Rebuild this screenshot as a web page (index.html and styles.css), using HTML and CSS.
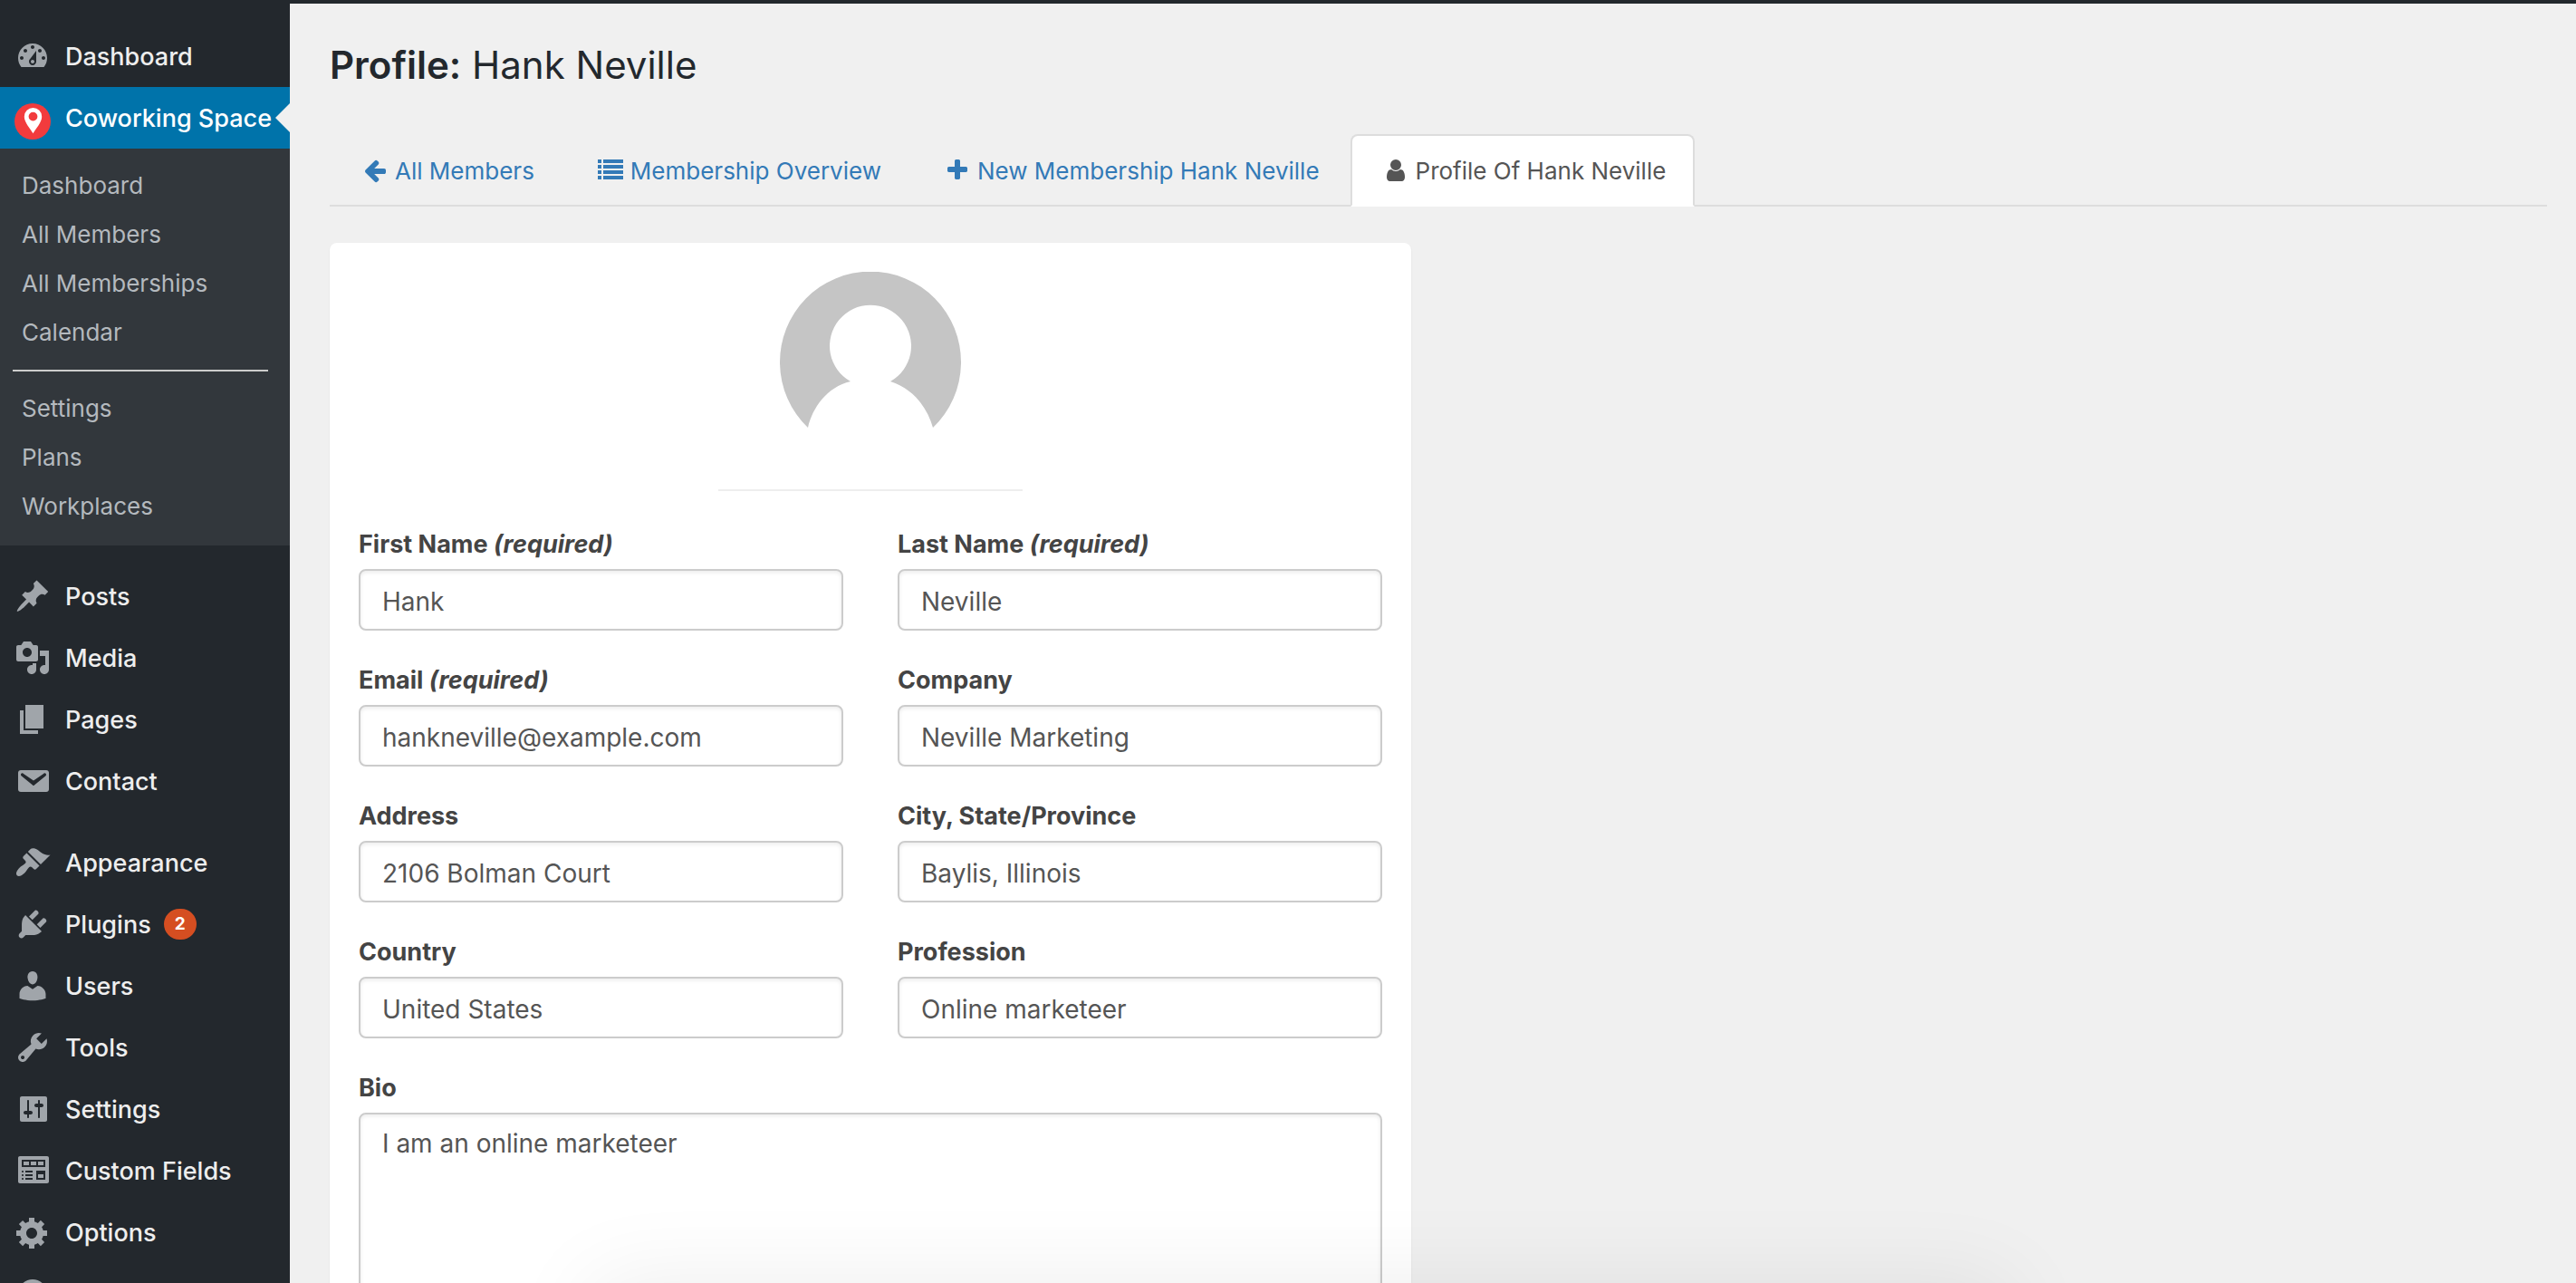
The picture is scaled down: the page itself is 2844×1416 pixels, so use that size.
FILE: index.html
```html
<!DOCTYPE html>
<html lang="en">
<head>
<meta charset="utf-8">
<title>Profile: Hank Neville</title>
<link rel="stylesheet" href="styles.css">
</head>
<body>
<div class="app">
  <nav class="sidebar" aria-label="Main menu">
    <ul class="menu">
      <li><a class="menu-item" href="#"><svg class="menu-icon" viewBox="0 0 20 20"><path d="M3.76 16h12.48c1.1-1.37 1.76-3.11 1.76-5 0-4.42-3.58-8-8-8s-8 3.58-8 8c0 1.89.66 3.63 1.76 5zM10 4c.55 0 1 .45 1 1s-.45 1-1 1-1-.45-1-1 .45-1 1-1zM6 6c.55 0 1 .45 1 1s-.45 1-1 1-1-.45-1-1 .45-1 1-1zm8 0c.55 0 1 .45 1 1s-.45 1-1 1-1-.45-1-1 .45-1 1-1zm-5.37 5.55L12 7v6c0 1.1-.9 2-2 2s-2-.9-2-2c0-.57.24-1.08.63-1.45zM4 10c.55 0 1 .45 1 1s-.45 1-1 1-1-.45-1-1 .45-1 1-1zm12 0c.55 0 1 .45 1 1s-.45 1-1 1-1-.45-1-1 .45-1 1-1zm-5 3c0-.55-.45-1-1-1s-1 .45-1 1 .45 1 1 1 1-.45 1-1z"/></svg>Dashboard</a></li>
      <li>
        <a class="menu-item current" href="#"><svg class="menu-icon" viewBox="0 0 40 40"><circle cx="20" cy="24" r="20" fill="#f23b3d"/><path fill="#fff" fill-rule="evenodd" d="M20.500 9a9.700 9.700 0 0 1 9.700 9.700c0 6.300-6.700 13.300-9.700 18.600-3-5.300-9.700-12.300-9.700-18.600A9.700 9.700 0 0 1 20.500 9zm0 4.700a4.900 4.900 0 1 0 0 9.800 4.900 4.900 0 0 0 0-9.800z"/></svg>Coworking Space</a>
        <ul class="submenu">
          <li><a href="#">Dashboard</a></li>
          <li><a href="#">All Members</a></li>
          <li><a href="#">All Memberships</a></li>
          <li><a href="#">Calendar</a></li>
          <li class="submenu-rule" role="separator"></li>
          <li><a href="#">Settings</a></li>
          <li><a href="#">Plans</a></li>
          <li><a href="#">Workplaces</a></li>
        </ul>
      </li>
    </ul>
    <ul class="menu">
      <li><a class="menu-item" href="#"><svg class="menu-icon" viewBox="0 0 20 20"><path d="M10.440 3.020l1.820-1.820 6.360 6.350-1.830 1.820c-1.050-.68-2.480-.57-3.410.36l-.75.75c-.92.93-1.040 2.350-.35 3.410l-1.830 1.820-2.410-2.410-2.800 2.790c-.42.42-3.380 2.710-3.800 2.290s1.860-3.390 2.280-3.810l2.790-2.790L4.100 9.360l1.830-1.820c1.050.69 2.480.57 3.400-.36l.75-.75c.93-.92 1.050-2.350.36-3.410z"/></svg>Posts</a></li>
      <li><a class="menu-item" href="#"><svg class="menu-icon" viewBox="0 0 20 20"><path d="M13 11V4c0-.55-.45-1-1-1h-1.670L9 1H5L3.670 3H2c-.55 0-1 .45-1 1v7c0 .55.45 1 1 1h10c.55 0 1-.45 1-1zM7 4.500c1.380 0 2.500 1.120 2.500 2.500S8.380 9.500 7 9.500 4.500 8.380 4.500 7 5.620 4.500 7 4.500zM14 6h5v10.500c0 1.380-1.120 2.500-2.500 2.500S14 17.880 14 16.500s1.120-2.500 2.500-2.500c.17 0 .34.02.5.05V9h-3V6zm-4 8.050V13h2v3.500c0 1.380-1.120 2.500-2.500 2.500S7 17.880 7 16.500 8.120 14 9.500 14c.17 0 .34.02.5.05z"/></svg>Media</a></li>
      <li><a class="menu-item" href="#"><svg class="menu-icon" viewBox="0 0 20 20"><path d="M6 15V2h10v13H6zm-1 1h8v2H3V5h2v11z"/></svg>Pages</a></li>
      <li><a class="menu-item" href="#"><svg class="menu-icon" viewBox="0 0 20 20"><path d="M3.500 4h14c.9 0 1.500.6 1.500 1.400v9.200c0 .8-.6 1.400-1.500 1.400h-14c-.9 0-1.500-.6-1.500-1.400V5.400C2 4.600 2.600 4 3.500 4zm7 8.600l6.730-5.530c.24-.2.43-.66.13-1.070-.29-.41-.82-.42-1.170-.17l-5.690 3.860L4.800 5.830c-.35-.25-.88-.24-1.170.17-.3.41-.11.87.13 1.070z"/></svg>Contact</a></li>
    </ul>
    <ul class="menu">
      <li><a class="menu-item" href="#"><svg class="menu-icon" viewBox="0 0 20 20"><path d="M14.480 11.060L7.410 3.990l1.500-1.500c.5-.56 2.300-.47 3.510.32 1.210.8 1.430 1.280 2.910 2.100 1.180.64 2.450 1.260 4.450.85zm-.71.71L6.700 4.700 4.930 6.470c-.39.39-.39 1.020 0 1.410l1.060 1.060c.39.39.39 1.030 0 1.420-.6.6-1.430 1.110-2.210 1.690-.35.26-.7.53-1.010.84C1.430 14.230.4 16.080 1.400 17.070c.99 1 2.840-.03 4.180-1.360.31-.31.58-.66.85-1.020.57-.78 1.080-1.610 1.690-2.210.39-.39 1.020-.39 1.410 0l1.060 1.060c.39.39 1.020.39 1.410 0z"/></svg>Appearance</a></li>
      <li><a class="menu-item" href="#"><svg class="menu-icon" viewBox="0 0 20 20"><path d="M13.110 4.360L9.870 7.600 8 5.730l3.240-3.240c.35-.34 1.050-.2 1.560.32.52.51.66 1.210.31 1.550zm-8 1.770l.91-1.120 9.010 9.010-1.190.84c-.71.71-2.630 1.160-3.820 1.160H6.140L4.900 17.260c-.59.59-1.540.59-2.120 0-.59-.58-.59-1.530 0-2.120l1.240-1.240v-3.880c0-1.130.4-3.190 1.090-3.890zm7.260 3.970l3.240-3.240c.34-.35 1.040-.21 1.550.31.52.51.66 1.210.31 1.550l-3.240 3.250z"/></svg>Plugins<span class="badge">2</span></a></li>
      <li><a class="menu-item" href="#"><svg class="menu-icon" viewBox="0 0 20 20"><path d="M10 9.250c-2.270 0-2.730-3.440-2.730-3.440C7 4.020 7.820 2 9.970 2c2.160 0 2.980 2.020 2.710 3.810 0 0-.41 3.440-2.680 3.440zm0 2.570L12.720 10c2.390 0 4.520 2.330 4.520 4.530v2.490s-3.650 1.130-7.240 1.130c-3.650 0-7.240-1.130-7.240-1.130v-2.490c0-2.250 1.940-4.480 4.470-4.480z"/></svg>Users</a></li>
      <li><a class="menu-item" href="#"><svg class="menu-icon" viewBox="0 0 20 20"><path d="M16.680 9.770c-1.340 1.340-3.300 1.670-4.950.99l-5.410 6.520c-.99.99-2.590.99-3.580 0s-.99-2.590 0-3.570l6.520-5.420c-.68-1.650-.35-3.610.99-4.950 1.280-1.280 3.120-1.620 4.720-1.060l-2.890 2.890 2.820 2.820 2.860-2.870c.53 1.580.18 3.390-1.080 4.650zM3.810 16.210c.4.39 1.040.39 1.430 0 .4-.4.4-1.040 0-1.430-.39-.4-1.030-.4-1.430 0-.39.39-.39 1.030 0 1.430z"/></svg>Tools</a></li>
      <li><a class="menu-item" href="#"><svg class="menu-icon" viewBox="0 0 20 20"><path d="M18 16V4c0-.55-.45-1-1-1H4c-.55 0-1 .45-1 1v12c0 .55.45 1 1 1h13c.55 0 1-.45 1-1zM8 11h1c.55 0 1 .45 1 1s-.45 1-1 1H8v1.500c0 .28-.22.5-.5.5s-.5-.22-.5-.5V13H6c-.55 0-1-.45-1-1s.45-1 1-1h1V5.500c0-.28.22-.5.5-.5s.5.22.5.5V11zm5-2h-1c-.55 0-1-.45-1-1s.45-1 1-1h1V5.500c0-.28.22-.5.5-.5s.5.22.5.5V7h1c.55 0 1 .45 1 1s-.45 1-1 1h-1v5.500c0 .28-.22.5-.5.5s-.5-.22-.5-.5V9z"/></svg>Settings</a></li>
      <li><a class="menu-item" href="#"><svg class="menu-icon" viewBox="0 0 20 20"><path d="M19 16V3c0-.55-.45-1-1-1H3c-.55 0-1 .45-1 1v13c0 .55.45 1 1 1h15c.55 0 1-.45 1-1zM4 4h13v4H4V4zm1 1v2h3V5H5zm4 0v2h3V5H9zm4 0v2h3V5h-3zm-8.500 5c.28 0 .5.22.5.5s-.22.5-.5.5-.5-.22-.5-.5.22-.5.5-.5zM6 10h4v1H6v-1zm6 0h5v5h-5v-5zm-7.500 2c.28 0 .5.22.5.5s-.22.5-.5.5-.5-.22-.5-.5.22-.5.5-.5zM6 12h4v1H6v-1zm7 0v2h3v-2h-3zm-8.500 2c.28 0 .5.22.5.5s-.22.5-.5.5-.5-.22-.5-.5.22-.5.5-.5zM6 14h4v1H6v-1z"/></svg>Custom Fields</a></li>
      <li><a class="menu-item" href="#"><svg class="menu-icon" viewBox="0 0 20 20"><path d="M18 12h-2.180c-.17.7-.44 1.350-.81 1.930l1.540 1.540-2.100 2.100-1.540-1.540c-.58.36-1.230.63-1.910.79V19H8v-2.180c-.68-.16-1.330-.43-1.910-.79l-1.540 1.540-2.120-2.120 1.540-1.540c-.36-.58-.63-1.230-.79-1.910H1V9.030h2.170c.16-.7.44-1.350.8-1.940L2.430 5.550l2.100-2.100 1.540 1.540c.58-.37 1.240-.64 1.930-.81V2h3v2.180c.68.16 1.330.43 1.910.79l1.540-1.540 2.120 2.120-1.540 1.540c.36.59.64 1.240.8 1.940H18V12zm-8.500 1.500c1.660 0 3-1.340 3-3s-1.340-3-3-3-3 1.340-3 3 1.340 3 3 3z"/></svg>Options</a></li>
      <li><a class="menu-item" href="#" aria-label="More"><svg class="menu-icon" viewBox="0 0 20 20"><circle cx="10" cy="10" r="8"/></svg></a></li>
    </ul>
  </nav>

  <main class="main">
    <h1 class="title"><strong>Profile:</strong> Hank Neville</h1>

    <nav class="tabs" aria-label="Member">
      <a class="tab" href="#"><svg class="tab-icon" viewBox="0 0 1792 1792"><path d="M1664 896v128q0 53-32.500 90.500t-84.500 37.500h-704l293 294q38 36 38 90t-38 90l-75 76q-37 37-90 37-52 0-91-37l-651-652q-37-37-37-90 0-52 37-91l651-650q38-38 91-38 52 0 90 38l75 74q38 38 38 91t-38 91l-293 293h704q52 0 84.500 37.500t32.500 90.500z"/></svg>All Members</a>
      <a class="tab" href="#"><svg class="tab-icon" viewBox="0 0 28 28"><path d="M0 2h4v4H0zM0 8h4v4H0zM0 14h4v4H0zM0 20h4v4H0zM6 2h22v4H6zM6 8h22v4H6zM6 14h22v4H6zM6 20h22v4H6z"/></svg>Membership Overview</a>
      <a class="tab" href="#"><svg class="tab-icon" viewBox="0 0 1792 1792"><path d="M1600 736v192q0 40-28 68t-68 28h-416v416q0 40-28 68t-68 28h-192q-40 0-68-28t-28-68v-416h-416q-40 0-68-28t-28-68v-192q0-40 28-68t68-28h416v-416q0-40 28-68t68-28h192q40 0 68 28t28 68v416h416q40 0 68 28t28 68z"/></svg>New Membership Hank Neville</a>
      <a class="tab active" href="#" aria-current="page"><svg class="tab-icon" viewBox="0 0 1792 1792"><path d="M1536 1399q0 109-62.500 187t-150.500 78h-854q-88 0-150.500-78t-62.500-187q0-85 8.500-160.500t31.500-152 58.500-131 94-89 134.500-34.500q131 128 313 128t313-128q76 0 134.500 34.500t94 89 58.500 131 31.500 152 8.500 160.500zm-256-887q0 159-112.500 271.500t-271.500 112.500-271.500-112.500-112.500-271.500 112.500-271.500 271.500-112.500 271.500 112.500 112.500 271.500z"/></svg>Profile Of Hank Neville</a>
    </nav>

    <form class="card">
      <svg class="avatar" viewBox="0 0 200 200" role="img" aria-label="Hank Neville">
        <path fill="#c5c5c5" d="M31 172A100 100 0 1 1 169 172C163 151 148 129 122 121A45 45 0 1 0 78 121C52 127 36 150 31 172z"/>
      </svg>
      <hr class="rule">
      <div class="fields">
        <div class="field"><label for="first">First Name <em>(required)</em></label><input id="first" type="text" value="Hank"></div>
        <div class="field"><label for="last">Last Name <em>(required)</em></label><input id="last" type="text" value="Neville"></div>
        <div class="field"><label for="email">Email <em>(required)</em></label><input id="email" type="email" value="hankneville@example.com"></div>
        <div class="field"><label for="company">Company</label><input id="company" type="text" value="Neville Marketing"></div>
        <div class="field"><label for="address">Address</label><input id="address" type="text" value="2106 Bolman Court"></div>
        <div class="field"><label for="city">City, State/Province</label><input id="city" type="text" value="Baylis, Illinois"></div>
        <div class="field"><label for="country">Country</label><input id="country" type="text" value="United States"></div>
        <div class="field"><label for="profession">Profession</label><input id="profession" type="text" value="Online marketeer"></div>
        <div class="field wide"><label for="bio">Bio</label><textarea id="bio" rows="8">I am an online marketeer</textarea></div>
      </div>
    </form>
  </main>
</div>
</body>
</html>
```
FILE: styles.css
```css
* {
  box-sizing: border-box;
}

body {
  margin: 0;
  background: #f0f0f0;
  color: #444;
  font-family: Inter, "Liberation Sans", sans-serif;
  font-size: 27px;
}

a {
  text-decoration: none;
}

.app {
  display: flex;
  height: 100vh;
  overflow: hidden;
  border-top: 4px solid #23282d;
}

/* Shade rising from the bottom edge of the window */
.app::after {
  content: "";
  position: fixed;
  left: 23%;
  right: 22%;
  bottom: -160px;
  height: 160px;
  box-shadow: 0 0 100px rgba(0, 0, 0, 0.075);
  pointer-events: none;
}

/* Sidebar */
.sidebar {
  flex: 0 0 320px;
  padding-top: 24px;
  background: #23282d;
}

.menu,
.submenu {
  margin: 0;
  padding: 0;
  list-style: none;
}

.menu + .menu {
  margin-top: 22px;
}

.menu-item {
  position: relative;
  display: flex;
  align-items: center;
  height: 68px;
  padding-left: 16px;
  color: #eee;
  font-weight: 500;
  white-space: nowrap;
}

.menu-icon {
  flex: none;
  width: 40px;
  height: 40px;
  margin-right: 16px;
  overflow: visible;
  fill: #a0a5aa;
}

.menu-item.current {
  background: #0073aa;
  color: #fff;
}

.menu-item.current::after {
  content: "";
  position: absolute;
  right: 0;
  top: 18px;
  border: 16px solid transparent;
  border-left: 0;
  border-right-color: #f0f0f0;
}

.badge {
  margin-left: 14px;
  min-width: 36px;
  border-radius: 17px;
  background: #d54e21;
  color: #fff;
  font-size: 19px;
  font-weight: 700;
  line-height: 34px;
  text-align: center;
}

.submenu {
  padding: 14px 0 16px;
  background: #32373c;
}

.submenu a {
  display: block;
  padding-left: 24px;
  color: #b4b9be;
  font-size: 26px;
  line-height: 54px;
}

.submenu-rule {
  height: 2px;
  margin: 14px 24px 14px 14px;
  background: #ccc;
}

/* Main column */
.main {
  flex: 1;
  min-width: 0;
  padding: 38px 32px 0 44px;
}

.title {
  margin: 0;
  color: #23282d;
  font-size: 42px;
  font-weight: 400;
  line-height: 60px;
}

.title strong {
  font-weight: 600;
}

.tabs {
  display: flex;
  gap: 2px;
  margin: 46px 0 40px;
  box-shadow: inset 0 -2px #ddd;
}

.tab {
  display: flex;
  align-items: center;
  height: 80px;
  padding: 0 30px;
  border: 2px solid transparent;
  border-radius: 8px 8px 0 0;
  color: #337ab7;
  font-size: 26px;
  white-space: nowrap;
}

.tab.active {
  border-color: #ddd;
  border-bottom-color: #fff;
  background: #fff;
  color: #555;
}

.tab-icon {
  width: 28px;
  height: 28px;
  margin: 0 8px 0 4px;
  fill: currentColor;
}

/* Profile form */
.card {
  width: calc(50% - 30px);
  padding: 32px;
  border-radius: 8px;
  background: #fff;
  box-shadow: 0 1px 2px rgba(0, 0, 0, 0.08);
}

.avatar {
  display: block;
  width: 200px;
  height: 200px;
  margin: 0 auto;
}

.rule {
  width: 336px;
  height: 2px;
  margin: 40px auto;
  border: 0;
  background: #eee;
}

.fields {
  display: grid;
  grid-template-columns: 1fr 1fr;
  gap: 36px 60px;
}

.wide {
  grid-column: 1 / -1;
}

.field label {
  display: block;
  margin-bottom: 8px;
  font-size: 27px;
  font-weight: 700;
  line-height: 38px;
}

.field input,
.field textarea {
  display: block;
  width: 100%;
  padding: 12px 24px 8px;
  border: 2px solid #ccc;
  border-radius: 8px;
  background: #fff;
  box-shadow: inset 0 2px 4px rgba(0, 0, 0, 0.08);
  color: #555;
  font-family: inherit;
  font-size: 28px;
  line-height: 40px;
  resize: none;
}

.field input {
  height: 68px;
}
```
